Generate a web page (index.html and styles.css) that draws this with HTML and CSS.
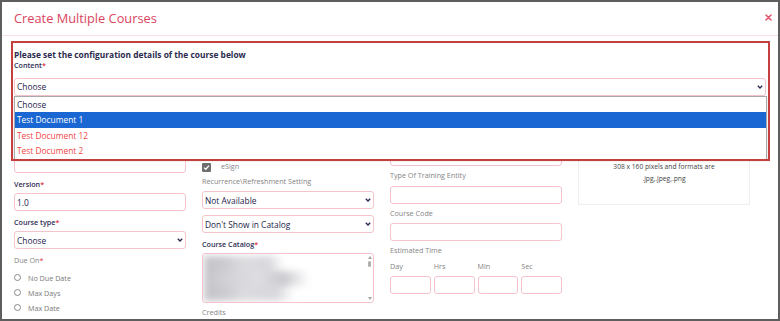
FILE: index.html
```html
<!DOCTYPE html>
<html lang="en">
<head>
    <meta charset="UTF-8">
    <meta name="viewport" content="width=device-width, initial-scale=1.0">
    <title>Create Multiple Courses</title>
    <link rel="stylesheet" href="styles.css">
</head>
<body>
    <div class="frame">
        <div class="modal-header">
            <h1 class="modal-title">Create Multiple Courses</h1>
            <span class="close-btn">
                <svg width="7" height="7" viewBox="0 0 7 7"><path d="M1 1L6 6M6 1L1 6" stroke="#e2566e" stroke-width="1.6" stroke-linecap="round"/></svg>
            </span>
        </div>

        <div class="modal-body">
            <p class="intro">Please set the configuration details of the course below</p>
            <label class="label strong content-label">Content<span class="req">*</span></label>

            <!-- open dropdown for content -->
            <div class="select-wrap">
                <div class="select">
                    <span>Choose</span>
                    <svg class="chev" width="6" height="4" viewBox="0 0 6 4"><path d="M0.8 0.8L3 3L5.2 0.8" fill="none" stroke="#2b2a4e" stroke-width="1.4"/></svg>
                </div>
                <ul class="options">
                    <li>Choose</li>
                    <li class="active">Test Document 1</li>
                    <li class="missing">Test Document 12</li>
                    <li class="missing">Test Document 2</li>
                </ul>
            </div>

            <div class="form-grid">
                <div class="col">
                    <div class="input first-1"></div>
                    <label class="label strong">Version<span class="req">*</span></label>
                    <div class="input"><span>1.0</span></div>
                    <label class="label strong">Course type<span class="req">*</span></label>
                    <div class="select">
                        <span>Choose</span>
                        <svg class="chev" width="6" height="4" viewBox="0 0 6 4"><path d="M0.8 0.8L3 3L5.2 0.8" fill="none" stroke="#2b2a4e" stroke-width="1.4"/></svg>
                    </div>
                    <label class="label muted due-label">Due On<span class="req">*</span></label>
                    <div class="radio"><i></i>No Due Date</div>
                    <div class="radio"><i></i>Max Days</div>
                    <div class="radio"><i></i>Max Date</div>
                </div>

                <div class="col">
                    <div class="check-row">
                        <svg width="9" height="9" viewBox="0 0 9 9"><rect width="9" height="9" rx="1" fill="#6e6e6e"/><path d="M2 4.6L3.8 6.3L7 2.6" fill="none" stroke="#fff" stroke-width="1.3"/></svg>
                        <span>eSign</span>
                    </div>
                    <label class="label muted tight">Recurrence\Refreshment Setting</label>
                    <div class="select">
                        <span>Not Available</span>
                        <svg class="chev" width="6" height="4" viewBox="0 0 6 4"><path d="M0.8 0.8L3 3L5.2 0.8" fill="none" stroke="#2b2a4e" stroke-width="1.4"/></svg>
                    </div>
                    <div class="select spaced">
                        <span>Don't Show in Catalog</span>
                        <svg class="chev" width="6" height="4" viewBox="0 0 6 4"><path d="M0.8 0.8L3 3L5.2 0.8" fill="none" stroke="#2b2a4e" stroke-width="1.4"/></svg>
                    </div>
                    <label class="label strong">Course Catalog<span class="req">*</span></label>
                    <div class="listbox">
                        <div class="items">
                            <div class="item w1"></div>
                            <div class="item w2"></div>
                            <div class="item w3"></div>
                        </div>
                        <div class="scroll">
                            <svg width="4" height="3" viewBox="0 0 4 3"><path d="M0 3L2 0L4 3Z" fill="#a3a3a3"/></svg>
                            <span class="thumb"></span>
                            <svg class="down" width="4" height="3" viewBox="0 0 4 3"><path d="M0 0L2 3L4 0Z" fill="#a3a3a3"/></svg>
                        </div>
                    </div>
                    <label class="label muted tight">Credits</label>
                </div>

                <div class="col">
                    <div class="select first-3">
                        <span>Choose</span>
                        <svg class="chev" width="6" height="4" viewBox="0 0 6 4"><path d="M0.8 0.8L3 3L5.2 0.8" fill="none" stroke="#2b2a4e" stroke-width="1.4"/></svg>
                    </div>
                    <label class="label muted tight wide">Type Of Training Entity</label>
                    <div class="input"></div>
                    <label class="label muted tight">Course Code</label>
                    <div class="input"></div>
                    <label class="label muted tight flush">Estimated Time</label>
                    <div class="time-grid">
                        <span class="label muted">Day</span>
                        <span class="label muted">Hrs</span>
                        <span class="label muted">Min</span>
                        <span class="label muted">Sec</span>
                        <div class="input"></div>
                        <div class="input"></div>
                        <div class="input"></div>
                        <div class="input"></div>
                    </div>
                </div>

                <div class="col">
                    <div class="image-box">
                        <p>308 x 160 pixels and formats are</p>
                        <p>.jpg,.jpeg,.png</p>
                    </div>
                </div>
            </div>
        </div>

        <div class="highlight"></div>
    </div>
</body>
</html>
```

FILE: styles.css
```css
html, body {
    margin: 0;
    padding: 0;
    background-color: #fff;
    font-family: "Open Sans", "Noto Sans", Arial, sans-serif;
}

.frame {
    position: relative;
    width: 780px;
    height: 321px;
    box-sizing: border-box;
    border: 2px solid #5e5e5e;
    background-color: #fff;
    overflow: hidden;
}

.modal-header {
    display: flex;
    justify-content: space-between;
    align-items: flex-start;
    height: 16px;
    padding: 7.5px 6.5px 9.5px 12px;
    border-bottom: 1px solid #fbe0e6;
}

.modal-title {
    margin: 0;
    font-size: 12.8px;
    font-weight: 500;
    line-height: 16px;
    color: #d9445d;
}

.close-btn {
    display: block;
    width: 7px;
    height: 7px;
    margin-top: 4px;
}

.close-btn svg {
    display: block;
}

.modal-body {
    padding: 14px 12px 0 12px;
}

.intro {
    margin: 0;
    font-size: 8.4px;
    font-weight: 700;
    line-height: 10px;
    color: #2b2a4e;
}

.label {
    display: block;
    margin: 6px 0 4px;
    font-size: 7.2px;
    line-height: 10px;
    white-space: nowrap;
}

.label.strong {
    font-weight: 600;
    color: #2e2c55;
}

.label.muted {
    color: #858585;
}

.req {
    color: #e0344a;
}

.content-label {
    margin: 0 0 7.5px;
}

.first-1 { margin-top: 29px; }
.first-3 { margin-top: 22px; }
.label.tight { margin: 4px 0 5px; }
.label.wide { margin-bottom: 6px; }
.label.flush { margin-bottom: 0; }
.label.due-label { margin-bottom: 5px; }

.select,
.input {
    display: flex;
    align-items: center;
    justify-content: space-between;
    height: 18px;
    box-sizing: border-box;
    padding: 0 2px 0 2px;
    border: 1px solid #f4c3cc;
    border-radius: 3px;
    background-color: #fff;
    font-size: 8.4px;
    color: #23224a;
    white-space: nowrap;
}

.select.spaced {
    margin-top: 6px;
}

.chev {
    display: block;
    flex: none;
}

.select-wrap {
    position: relative;
}

.options {
    position: absolute;
    top: 100%;
    left: 0;
    right: -1px;
    z-index: 2;
    margin: 0;
    padding: 0;
    list-style: none;
    background-color: #fff;
    border: 1px solid #a9a9a9;
    box-shadow: 0 1px 2px rgba(0, 0, 0, 0.15);
}

.options li {
    height: 15.5px;
    padding-left: 2px;
    font-size: 8.4px;
    line-height: 15.5px;
    color: #23224a;
}

.options li.active {
    background-color: #1a66d2;
    color: #fff;
}

.options li.missing {
    color: #f04646;
}

.form-grid {
    display: grid;
    grid-template-columns: repeat(4, 172px);
    column-gap: 16px;
    margin-top: 30.5px;
}

.radio {
    display: flex;
    align-items: center;
    gap: 7px;
    height: 15px;
    font-size: 7.2px;
    color: #7a7a7a;
}

.radio i {
    display: block;
    width: 7px;
    height: 7px;
    box-sizing: border-box;
    border: 1px solid #8a8a8a;
    border-radius: 50%;
}

.check-row {
    display: flex;
    align-items: flex-start;
    gap: 10px;
    height: 10px;
    margin-top: 36px;
    padding-top: 0.5px;
    box-sizing: border-box;
}

.check-row svg {
    display: block;
}

.check-row span {
    font-size: 7.2px;
    line-height: 7px;
    color: #858585;
}

.listbox {
    display: flex;
    height: 50px;
    box-sizing: border-box;
    border: 1px solid #f4c3cc;
    border-radius: 3px;
    overflow: hidden;
}

.items {
    flex: 1;
    padding: 2px 0 0 1px;
    filter: blur(3.5px);
}

.item {
    height: 15px;
    background: linear-gradient(to right, #c3c3c9 0, #c9c9ce 18px, #dcdce0 40px, #d7d7dc 80%, rgba(220, 220, 224, 0) 100%);
}

.item.w1 { width: 80px; }
.item.w2 { width: 105px; background: linear-gradient(to right, #c3c3c9 0, #d4d4d8 25px, #dedee2 55px, #c9c9ce 80px, rgba(220, 220, 224, 0) 100%); }
.item.w3 { width: 90px; }

.scroll {
    display: flex;
    flex-direction: column;
    align-items: center;
    width: 7px;
    padding: 2px 0 2px;
    box-sizing: border-box;
}

.scroll svg {
    display: block;
}

.thumb {
    display: block;
    width: 3px;
    height: 6px;
    margin-top: 2px;
    border-radius: 1.5px;
    background-color: #b0b0b0;
}

.scroll .down {
    margin-top: auto;
}

.time-grid {
    display: grid;
    grid-template-columns: repeat(4, 1fr);
    column-gap: 3px;
    margin-top: 6px;
}

.time-grid .label {
    margin: 0 0 5px;
}

.image-box {
    height: 79px;
    box-sizing: border-box;
    padding-top: 34.4px;
    border: 1px solid #efefef;
    text-align: center;
}

.image-box p {
    margin: 0;
    font-size: 6.7px;
    line-height: 12px;
    color: #444;
}

.highlight {
    position: absolute;
    left: 9px;
    top: 39px;
    z-index: 3;
    width: 759px;
    height: 120px;
    box-sizing: border-box;
    border: 2px solid #c4403f;
    pointer-events: none;
}
```
